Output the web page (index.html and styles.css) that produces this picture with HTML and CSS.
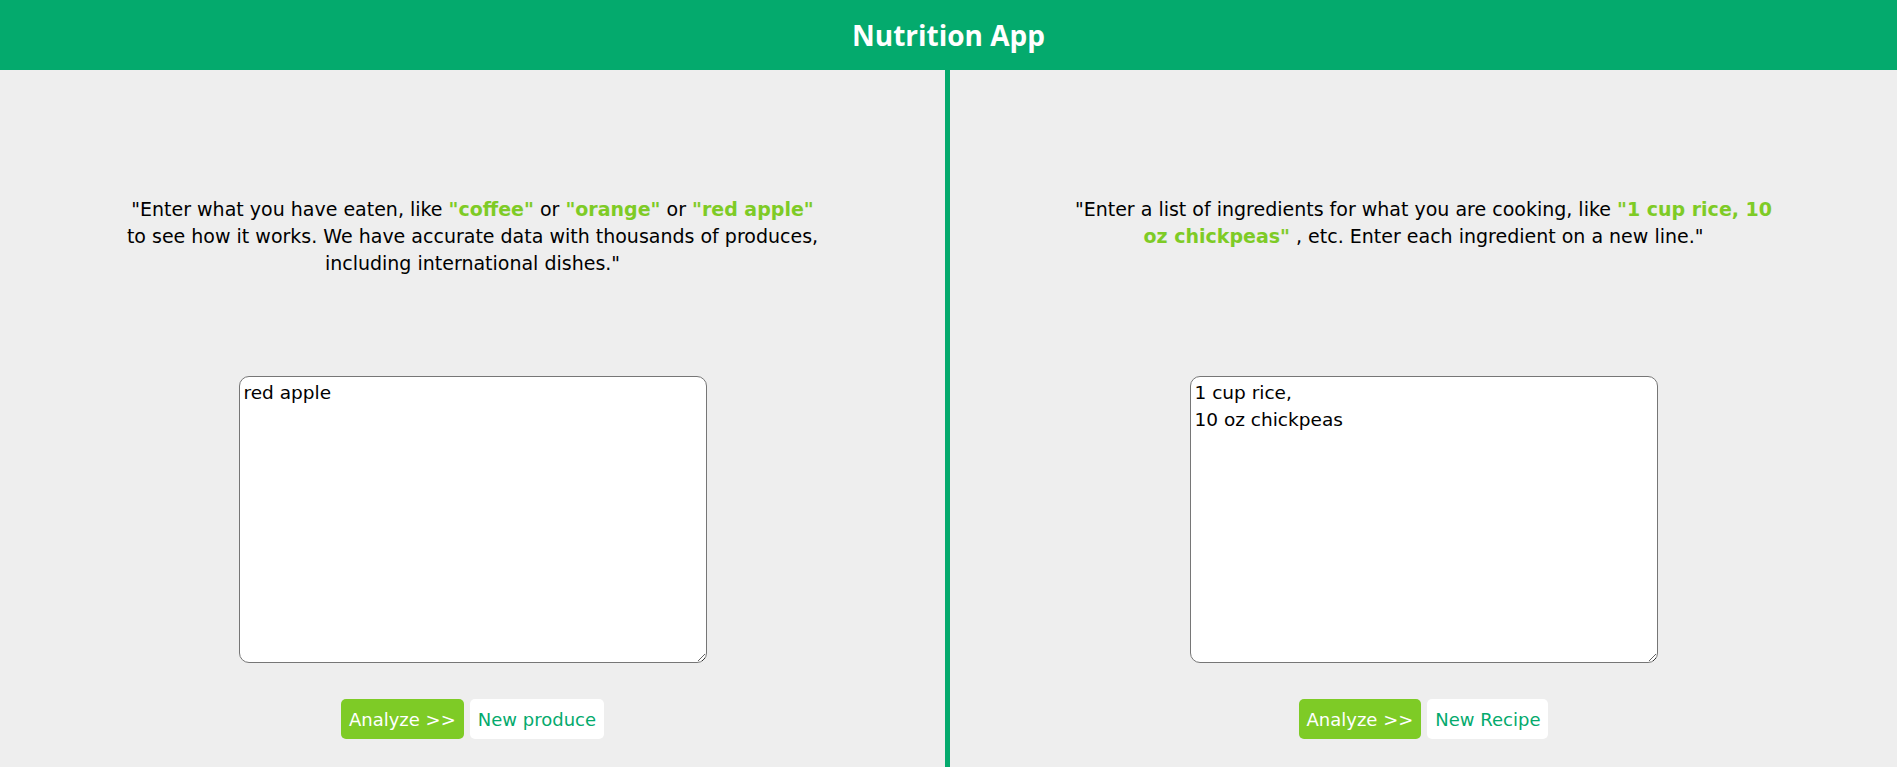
FILE: index.html
```html
<!DOCTYPE html>
<html lang="en">
<head>
<meta charset="utf-8">
<title>Nutrition App</title>
<link rel="stylesheet" href="styles.css">
</head>
<body>
<header class="topbar">
  <h1 class="title">Nutrition App</h1>
</header>
<main class="panels">
  <section class="panel">
    <p class="intro">"Enter what you have eaten, like <b class="hl">"coffee"</b> or <b class="hl">"orange"</b> or <b class="hl">"red apple"</b> to see how it works. We have accurate data with thousands of produces, including international dishes."</p>
    <textarea class="entry">red apple</textarea>
    <div class="actions">
      <button class="btn btn-primary">Analyze &gt;&gt;</button>
      <button class="btn btn-plain">New produce</button>
    </div>
  </section>
  <div class="divider"></div>
  <section class="panel">
    <p class="intro">"Enter a list of ingredients for what you are cooking, like <b class="hl">"1 cup rice, 10 oz chickpeas"</b> , etc. Enter each ingredient on a new line."</p>
    <textarea class="entry">1 cup rice,
10 oz chickpeas</textarea>
    <div class="actions">
      <button class="btn btn-primary">Analyze &gt;&gt;</button>
      <button class="btn btn-plain">New Recipe</button>
    </div>
  </section>
</main>
</body>
</html>
```
FILE: styles.css
```css
html, body {
  margin: 0;
  padding: 0;
  height: 100%;
}
body {
  background: #eeeeee;
  font-family: "DejaVu Sans", Verdana, sans-serif;
  color: #000;
  display: flex;
  flex-direction: column;
}
.topbar {
  background: #04aa6d;
  height: 70px;
  display: flex;
  align-items: center;
  justify-content: center;
  flex: none;
}
.title {
  margin: 0;
  color: #fff;
  font-family: "Open Sans", sans-serif;
  font-weight: 700;
  font-size: 28px;
  line-height: 1;
}
.panels {
  flex: 1;
  display: grid;
  grid-template-columns: 945px 5px 1fr;
}
.divider {
  background: #04aa6d;
}
.panel {
  display: flex;
  flex-direction: column;
  align-items: center;
  padding-top: 126px;
}
.intro {
  margin: 0;
  max-width: 702px;
  height: 180px;
  text-align: center;
  font-size: 19px;
  line-height: 27px;
}
.hl {
  color: #7ecb26;
  font-weight: 700;
}
.entry {
  box-sizing: border-box;
  width: 468px;
  height: 287px;
  border: 1px solid #767676;
  border-radius: 10px;
  background: #fff;
  padding: 2px 4px;
  font-family: "DejaVu Sans", Verdana, sans-serif;
  font-size: 18.5px;
  line-height: 27px;
  color: #000;
  resize: both;
}
.actions {
  display: flex;
  gap: 6px;
  margin-top: 36px;
}
.btn {
  height: 40px;
  padding: 0 8px;
  border: none;
  border-radius: 5px;
  font-family: "DejaVu Sans", Verdana, sans-serif;
  font-size: 18px;
}
.btn-primary {
  background: #7ecb26;
  color: #fff;
}
.btn-plain {
  background: #fff;
  color: #04aa6d;
}
```
